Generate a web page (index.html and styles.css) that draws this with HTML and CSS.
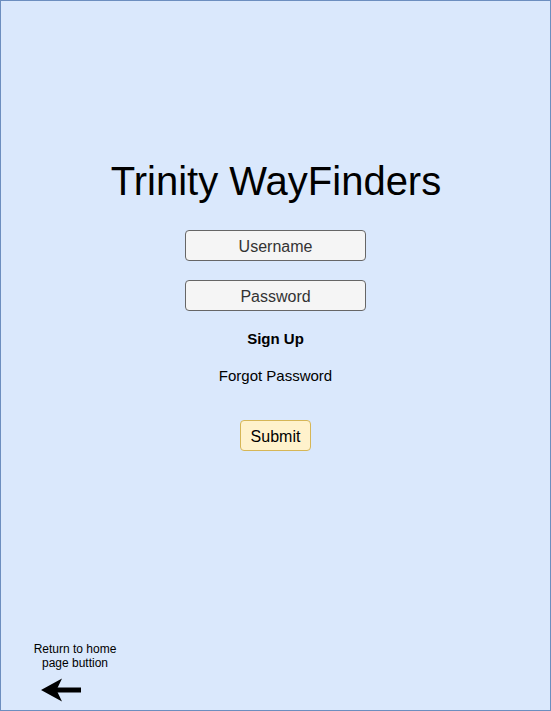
FILE: index.html
```html
<!DOCTYPE html>
<html>
<head>
<meta charset="utf-8">
<link rel="stylesheet" href="styles.css">
</head>
<body>
<div class="frame">
  <h1 class="title">Trinity WayFinders</h1>
  <div class="field field-user">Username</div>
  <div class="field field-pass">Password</div>
  <div class="signup">Sign Up</div>
  <div class="forgot">Forgot Password</div>
  <div class="submit">Submit</div>
  <div class="home">
    <div class="home-label">Return to home<br>page buttion</div>
    <svg class="home-arrow" width="42" height="24" viewBox="0 0 42 24">
      <path d="M1 12 L22 0.5 L16.5 12 L22 23.5 Z" fill="#000"/>
      <rect x="16" y="9.5" width="25" height="5" fill="#000"/>
    </svg>
  </div>
</div>
</body>
</html>
```

FILE: styles.css
```css
html, body {
  margin: 0;
  padding: 0;
}
body {
  font-family: "Liberation Sans", Arial, sans-serif;
}
.frame {
  width: 551px;
  height: 711px;
  box-sizing: border-box;
  border: 1px solid #6c8ebf;
  background: #dae8fc;
  display: flex;
  flex-direction: column;
  align-items: center;
  padding-top: 157px;
}
.title {
  margin: 0;
  font-size: 40px;
  font-weight: normal;
  line-height: 46px;
  color: #000;
  padding-left: 1px;
}
.field {
  width: 181px;
  height: 31px;
  box-sizing: border-box;
  border: 1px solid #666666;
  border-radius: 4px;
  background: #f5f5f5;
  color: #333333;
  font-size: 16px;
  line-height: 29px;
  padding-top: 1px;
  text-align: center;
}
.field-user {
  margin-top: 26px;
}
.field-pass {
  margin-top: 19px;
}
.signup {
  margin-top: 19px;
  font-size: 15px;
  font-weight: bold;
  line-height: 17px;
  color: #000;
}
.forgot {
  margin-top: 20px;
  font-size: 15px;
  line-height: 17px;
  color: #000;
}
.submit {
  margin-top: 36px;
  width: 71px;
  height: 31px;
  box-sizing: border-box;
  border: 1px solid #d6b656;
  border-radius: 4px;
  background: #fff2cc;
  color: #000;
  font-size: 16px;
  line-height: 29px;
  padding-top: 1px;
  text-align: center;
}
.home {
  margin-top: auto;
  align-self: flex-start;
  margin-left: 19px;
  margin-bottom: 8px;
  display: flex;
  flex-direction: column;
}
.home-label {
  width: 110px;
  font-size: 12px;
  line-height: 14px;
  text-align: center;
  color: #000;
}
.home-arrow {
  display: block;
  margin-top: 8px;
  margin-left: 20px;
}
```
